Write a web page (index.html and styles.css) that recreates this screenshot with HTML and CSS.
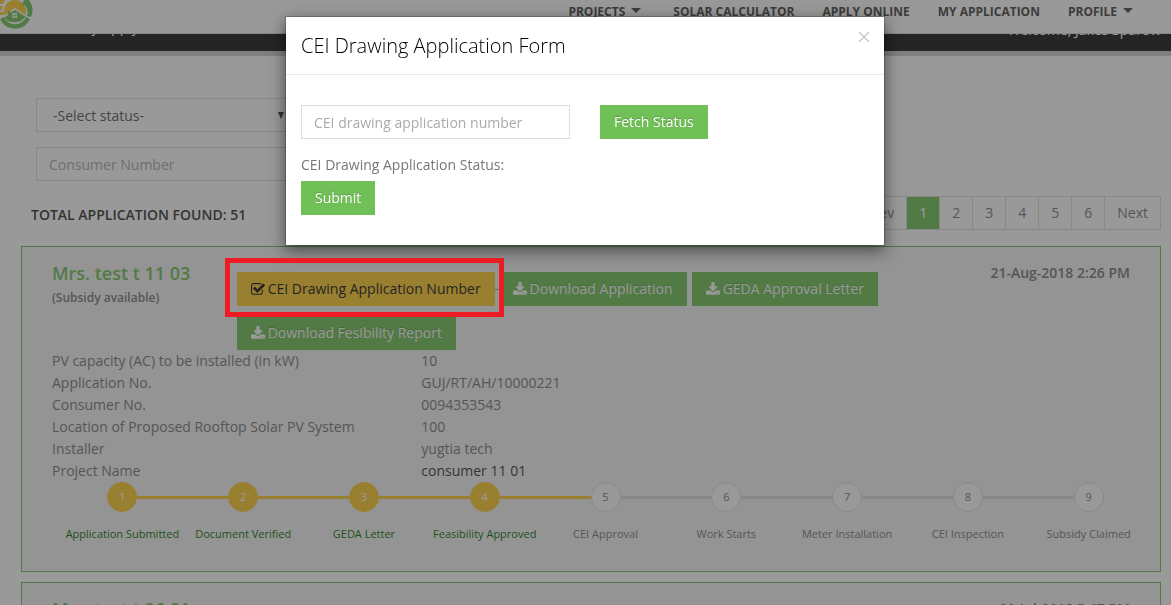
FILE: index.html
```html
<!DOCTYPE html>
<html lang="en">
<head>
<meta charset="utf-8">
<meta name="viewport" content="width=device-width, initial-scale=1">
<title>My Applications</title>
<link rel="stylesheet" href="styles.css">
</head>
<body>
<svg class="sprite" aria-hidden="true">
  <symbol id="download" viewBox="0 0 1664 1792"><path d="M1280 1344q0-26-19-45t-45-19-45 19-19 45 19 45 45 19 45-19 19-45zm256 0q0-26-19-45t-45-19-45 19-19 45 19 45 45 19 45-19 19-45zm128-224v320q0 40-28 68t-68 28h-1472q-40 0-68-28t-28-68v-320q0-40 28-68t68-28h465l135 136q58 56 136 56t136-56l136-136h464q40 0 68 28t28 68zm-325-569q17 41-14 70l-448 448q-18 19-45 19t-45-19l-448-448q-31-29-14-70 17-39 59-39h256v-448q0-26 19-45t45-19h256q26 0 45 19t19 45v448h256q42 0 59 39z"/></symbol>
  <symbol id="check" viewBox="64 0 1664 1792"><path d="M1472 930v318q0 119-84.5 203.5t-203.5 84.5h-832q-119 0-203.5-84.5t-84.5-203.5v-832q0-119 84.5-203.5t203.5-84.5h832q63 0 117 25 15 7 18 23 3 17-9 29l-49 49q-10 10-23 10-3 0-9-2-23-6-45-6h-832q-66 0-113 47t-47 113v832q0 66 47 113t113 47h832q66 0 113-47t47-113v-254q0-13 9-22l64-64q10-10 23-10 6 0 12 3 20 8 20 29zm231-489l-814 814q-24 24-57 24t-57-24l-430-430q-24-24-24-57t24-57l110-110q24-24 57-24t57 24l263 263 647-647q24-24 57-24t57 24l110 110q24 24 24 57t-24 57z"/></symbol>
</svg>

<header class="topbar">
  <a class="logo" href="#" aria-label="Home">
    <svg width="33" height="30" viewBox="0 0 33 30">
      <circle cx="15" cy="11" r="11" fill="#ffcb2d"/>
      <path d="M0 0h5l-2 4H0zM0 6h3l-1 4H0zM0 12h4v3H0z" fill="#ffcb2d"/>
      <path d="M9 0L4 5M3 9l2-3M22 0l3 4" stroke="#fff" stroke-width="1"/>
      <path d="M1 18L15 8l13 9v6H1z" fill="#fff"/>
      <path d="M4 18l4-3v-4h2v2l5-3 11 7-2 1c-3 5-14 6-18 1z" fill="#71c057"/>
      <path d="M12.500 13h4.500v5h-4.500z" fill="#fff"/>
      <path d="M13.500 15.500h3M15 14v4" stroke="#71c057" stroke-width=".7"/>
      <path d="M0 19a16.500 16.500 0 0 0 30 0l-4-2a12 12 0 0 1-22 0z" fill="#71c057"/>
      <path d="M31 17a17 17 0 0 0-2-17h-5l-2 6 3-1a12 12 0 0 1 2 11z" fill="#71c057"/>
    </svg>
  </a>
  <nav class="nav">
    <a class="drop" href="#">PROJECTS<i class="caret"></i></a>
    <a href="#">SOLAR CALCULATOR</a>
    <a href="#">APPLY ONLINE</a>
    <a href="#">MY APPLICATION</a>
    <a class="drop" href="#">PROFILE<i class="caret"></i></a>
  </nav>
</header>

<div class="banner">
  <span class="banner-title">My Apply</span>
  <span class="banner-user">Welcome, Jakes Sparow</span>
</div>

<main class="page">
  <form class="filters">
    <div class="select-wrap">
      <select class="control" aria-label="Status"><option>-Select status-</option></select>
      <svg class="arrow" width="6" height="7" viewBox="0 0 6 7"><path d="M0 0h6L3 7z"/></svg>
    </div>
    <input class="control" type="text" placeholder="Consumer Number" aria-label="Consumer Number">
  </form>

  <div class="summary">
    <h2 class="total">TOTAL APPLICATION FOUND: 51</h2>
    <nav class="pages" aria-label="Pages">
      <a href="#">Prev</a><a class="current" href="#">1</a><a href="#">2</a><a href="#">3</a><a href="#">4</a><a href="#">5</a><a href="#">6</a><a href="#">Next</a>
    </nav>
  </div>

  <article class="card">
    <div class="card-head">
      <div class="who">
        <h3>Mrs. test t 11 03</h3>
        <p>(Subsidy available)</p>
      </div>
      <div class="actions">
        <span class="marked"><button class="btn btn-yellow" type="button"><svg class="icon"><use href="#check"/></svg>CEI Drawing Application Number</button><span class="marker"></span></span><span class="joint"></span>
        <button class="btn" type="button"><svg class="icon"><use href="#download"/></svg>Download Application</button>
        <button class="btn spaced" type="button"><svg class="icon"><use href="#download"/></svg>GEDA Approval Letter</button>
        <button class="btn" type="button"><svg class="icon"><use href="#download"/></svg>Download Fesibility Report</button>
      </div>
      <time class="date">21-Aug-2018 2:26 PM</time>
    </div>
    <dl class="details">
      <dt>PV capacity (AC) to be installed (in kW)</dt><dd>10</dd>
      <dt>Application No.</dt><dd>GUJ/RT/AH/10000221</dd>
      <dt>Consumer No.</dt><dd>0094353543</dd>
      <dt>Location of Proposed Rooftop Solar PV System</dt><dd>100</dd>
      <dt>Installer</dt><dd>yugtia tech</dd>
      <dt>Project Name</dt><dd><a href="#">consumer 11 01</a></dd>
    </dl>
    <ol class="steps">
      <li class="done"><b>1</b><span>Application Submitted</span></li>
      <li class="done"><b>2</b><span>Document Verified</span></li>
      <li class="done"><b>3</b><span>GEDA Letter</span></li>
      <li class="done"><b>4</b><span>Feasibility Approved</span></li>
      <li><b>5</b><span>CEI Approval</span></li>
      <li><b>6</b><span>Work Starts</span></li>
      <li><b>7</b><span>Meter Installation</span></li>
      <li><b>8</b><span>CEI Inspection</span></li>
      <li><b>9</b><span>Subsidy Claimed</span></li>
    </ol>
  </article>

  <article class="card">
    <div class="card-head">
      <div class="who"><h3>Mrs. test t 06 01</h3></div>
      <div class="actions"></div>
      <time class="date">20-Jul-2018 5:47 PM</time>
    </div>
  </article>
</main>

<div class="backdrop">
  <section class="modal" role="dialog" aria-labelledby="modal-title">
    <div class="modal-head">
      <h1 id="modal-title">CEI Drawing Application Form</h1>
      <button class="close" type="button" aria-label="Close"><svg width="10" height="10" viewBox="0 0 10 10"><path d="M0 0l10 10M10 0L0 10"/></svg></button>
    </div>
    <form class="modal-body">
      <div class="modal-row">
        <input class="control" type="text" placeholder="CEI drawing application number" aria-label="CEI drawing application number">
        <div><button class="btn" type="button">Fetch Status</button></div>
      </div>
      <p>CEI Drawing Application Status:</p>
      <button class="btn" type="button">Submit</button>
    </form>
  </section>
</div>
</body>
</html>
```
FILE: styles.css
```css
* { box-sizing: border-box; }
body {
  display: flex;
  flex-direction: column;
  margin: 0;
  height: 100vh;
  overflow: hidden;
  background: #fff;
  color: #777;
  font: 14px/22px "Open Sans", sans-serif;
}
h1, h2, h3, p, dl, dd, ol { margin: 0; padding: 0; }
a { color: inherit; text-decoration: none; }
button, input, select { font: inherit; }
.sprite { position: absolute; width: 0; height: 0; }

.topbar {
  display: flex;
  flex: none;
  justify-content: space-between;
  height: 34px;
  border-bottom: 1px solid #ddd;
}
.logo svg { display: block; }
.nav {
  display: flex;
  gap: 28px;
  padding: 1px 34px 0 0;
  color: #444;
  font-size: 12px;
  font-weight: 700;
}
.drop { padding-right: 4px; }
.caret {
  display: inline-block;
  margin-left: 6px;
  border: 5px solid transparent;
  border-top-color: #444;
  border-bottom: 0;
  vertical-align: 3px;
}

.banner {
  display: flex;
  flex: none;
  justify-content: space-between;
  align-items: flex-start;
  height: 22px;
  padding: 0 10px 0 79px;
  overflow: hidden;
  border-bottom: 5px solid #ccc;
  background: #171717;
  color: #fff;
}
.banner-title { margin-top: -18px; }
.banner-user { margin-top: -15px; }

.page {
  flex: 1;
  min-height: 0;
  padding: 42px 10px 0 21px;
  overflow: hidden;
}
.filters {
  display: flex;
  flex-direction: column;
  gap: 15px;
  width: 256px;
  margin-left: 15px;
}
.select-wrap { position: relative; }
.arrow {
  position: absolute;
  top: 14px;
  right: 8px;
  fill: #333;
}
.control {
  display: block;
  width: 100%;
  height: 34px;
  padding: 6px 12px;
  border: 1px solid #ddd;
  border-radius: 0;
  background: transparent;
  color: #555;
}
select.control { appearance: none; padding-left: 16px; }
.control::placeholder { color: #aaa; opacity: 1; }

.summary {
  display: flex;
  justify-content: space-between;
  align-items: center;
  margin: 15px 0 16px;
  padding-left: 10px;
}
.total {
  padding-top: 4px;
  color: #333;
  font-size: 14px;
  font-weight: 600;
}
.pages { display: flex; }
.pages a {
  margin-left: -1px;
  padding: 6px 12px;
  border: 1px solid #ddd;
  line-height: 20px;
}
.pages .current {
  border-color: #ddd;
  background: #71c057;
  color: #fff;
}

.card {
  margin-bottom: 10px;
  padding: 15px 15px 26px;
  border: 1px solid #71c057;
  background: #f5f5f5;
}
.card-head {
  display: grid;
  grid-template-columns: 2fr 8fr 2fr;
}
.card-head > * { padding: 0 15px; }
.card-head h3 {
  color: #71c057;
  font-size: 18px;
  font-weight: 600;
  white-space: nowrap;
}
.card-head p { font-size: 12px; font-weight: 600; line-height: 28px; }
.card-head .date {
  font-weight: 600;
  text-align: right;
  white-space: nowrap;
}
.card-head .actions {
  display: flex;
  flex-wrap: wrap;
  align-items: center;
  row-gap: 10px;
  padding-top: 10px;
}
.btn {
  height: 34px;
  padding: 0 14px;
  border: 0;
  background: #71c057;
  color: #fff;
  text-shadow: 0 -1px 0 rgba(0, 0, 0, .2);
  white-space: nowrap;
}
.btn-yellow { background: #ffcb2d; color: #111; text-shadow: none; }
.spaced { margin-left: 5px; }
.icon {
  width: 14px;
  height: 15px;
  margin-right: 3px;
  fill: currentColor;
  vertical-align: -3px;
}
.marked { position: relative; display: flex; }
.marker {
  position: absolute;
  z-index: 20;
  inset: -14px -9px -11px -12px;
  border: 5px solid #ed1c24;
}
.joint { width: 4px; height: 1px; background: #71c057; }

.details { display: grid; grid-template-columns: 1fr 2fr; }
.details > * { padding: 0 15px; }
.details a { color: #333; }

.steps {
  display: flex;
  margin: 0 -4px 0 25px;
  list-style: none;
}
.steps li {
  position: relative;
  flex: 1;
  font-size: 11px;
  text-align: center;
}
.steps li + li::before {
  content: "";
  position: absolute;
  top: 14px;
  right: 50%;
  width: 100%;
  height: 3px;
  background: #ddd;
}
.steps .done + li::before { background: #ffcb2d; }
.steps b {
  position: relative;
  z-index: 1;
  display: block;
  width: 30px;
  height: 30px;
  margin: 0 auto 11px;
  border: 1px solid #ddd;
  border-radius: 50%;
  background: #fff;
  font-weight: 400;
  line-height: 28px;
}
.steps .done b { border-color: #ffcb2d; background: #ffcb2d; color: #fff; }
.steps span { display: block; }
.steps .done span { color: #007000; }

.backdrop {
  position: fixed;
  z-index: 10;
  inset: 0;
  padding: 16px 11px 16px 10px;
  background: rgba(51, 51, 51, .5);
}
.modal {
  max-width: 600px;
  margin: 0 auto;
  border: 1px solid rgba(0, 0, 0, .2);
  background: #fff;
  background-clip: padding-box;
  box-shadow: 0 5px 15px rgba(0, 0, 0, .5);
}
.modal-head {
  display: flex;
  justify-content: space-between;
  align-items: flex-start;
  padding: 15px;
  border-bottom: 1px solid #e9e9e9;
}
.modal-head h1 {
  color: #000;
  font-size: 20px;
  font-weight: 300;
  line-height: 27px;
}
.close { padding: 0; border: 0; background: none; }
.close svg { display: block; fill: none; stroke: #ccc; stroke-width: 1.500; }
.modal-body { padding: 30px 15px; }
.modal-row {
  display: grid;
  grid-template-columns: 1fr 1fr;
  gap: 30px;
}
.modal-body p { margin: 15px 0 5px; }
```
